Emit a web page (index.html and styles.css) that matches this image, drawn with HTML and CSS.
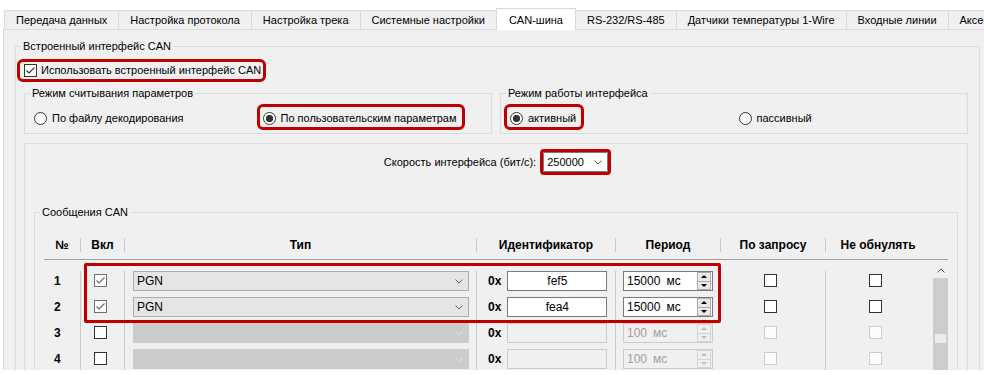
FILE: index.html
```html
<!DOCTYPE html>
<html lang="ru">
<head>
  <meta charset="UTF-8" />
  <title>Настройки — CAN-шина</title>
  <link rel="stylesheet" href="styles.css">
</head>
<body>
  <div class="tabs">
    <div class="tab">Передача данных</div>
    <div class="tab">Настройка протокола</div>
    <div class="tab">Настройка трека</div>
    <div class="tab">Системные настройки</div>
    <div class="tab active">CAN-шина</div>
    <div class="tab">RS-232/RS-485</div>
    <div class="tab">Датчики температуры 1-Wire</div>
    <div class="tab">Входные линии</div>
    <div class="tab">Аксессуары</div>
  </div>

  <div class="page">
    <fieldset class="group outer">
      <legend>Встроенный интерфейс CAN</legend>

      <div class="use-row">
        <label class="check mark mark-use">
          <span class="cb"><svg class="tick" viewBox="0 0 11 11"><polyline points="1.5,5.5 4,8 9.5,2.5"/></svg></span>
          Использовать встроенный интерфейс CAN
        </label>
      </div>

      <div class="modes">
        <fieldset class="group">
          <legend>Режим считывания параметров</legend>
          <div class="radios">
            <label class="radio"><span class="rb"></span>По файлу декодирования</label>
            <label class="radio mark mark-radio"><span class="rb on"></span>По пользовательским параметрам</label>
          </div>
        </fieldset>
        <fieldset class="group">
          <legend>Режим работы интерфейса</legend>
          <div class="radios">
            <label class="radio mark mark-radio mark-active"><span class="rb on"></span>активный</label>
            <label class="radio"><span class="rb"></span>пассивный</label>
          </div>
        </fieldset>
      </div>

      <div class="speed-panel">
        <div class="speed-row">
          <span>Скорость интерфейса (бит/с):</span>
          <div class="combo speed-combo mark mark-tight">
            <span>250000</span>
            <svg class="chev" viewBox="0 0 8 5"><polyline points="0.5,0.5 4,4 7.5,0.5"/></svg>
          </div>
        </div>

        <fieldset class="group msgs">
          <legend>Сообщения CAN</legend>
          <div class="msgs-body">
            <div class="thead">
              <div class="th">№</div>
              <div class="th">Вкл</div>
              <div class="th">Тип</div>
              <div class="th">Идентификатор</div>
              <div class="th">Период</div>
              <div class="th">По запросу</div>
              <div class="th">Не обнулять</div>
            </div>

            <div class="tbody">
              <div class="rows">
                <div class="row">
                  <div class="td c-num">1</div>
                  <div class="td c-on"><span class="cb cb-grey"><svg class="tick" viewBox="0 0 11 11"><polyline points="1.5,5.5 4,8 9.5,2.5"/></svg></span></div>
                  <div class="td c-type"><div class="combo"><span>PGN</span><svg class="chev" viewBox="0 0 8 5"><polyline points="0.5,0.5 4,4 7.5,0.5"/></svg></div></div>
                  <div class="td c-id"><b>0x</b><div class="idbox">fef5</div></div>
                  <div class="td c-per"><div class="spin"><span>15000</span><span class="unit">мс</span><span class="spin-btns"><span><i class="up"></i></span><span><i class="down"></i></span></span></div></div>
                  <div class="td c-flag c-req"><span class="cb"></span></div>
                  <div class="td c-flag"><span class="cb"></span></div>
                </div>
                <div class="row">
                  <div class="td c-num">2</div>
                  <div class="td c-on"><span class="cb cb-grey"><svg class="tick" viewBox="0 0 11 11"><polyline points="1.5,5.5 4,8 9.5,2.5"/></svg></span></div>
                  <div class="td c-type"><div class="combo"><span>PGN</span><svg class="chev" viewBox="0 0 8 5"><polyline points="0.5,0.5 4,4 7.5,0.5"/></svg></div></div>
                  <div class="td c-id"><b>0x</b><div class="idbox">fea4</div></div>
                  <div class="td c-per"><div class="spin"><span>15000</span><span class="unit">мс</span><span class="spin-btns"><span><i class="up"></i></span><span><i class="down"></i></span></span></div></div>
                  <div class="td c-flag c-req"><span class="cb"></span></div>
                  <div class="td c-flag"><span class="cb"></span></div>
                </div>
                <div class="row">
                  <div class="td c-num">3</div>
                  <div class="td c-on"><span class="cb"></span></div>
                  <div class="td c-type"><div class="combo off"><span></span><svg class="chev" viewBox="0 0 8 5"><polyline points="0.5,0.5 4,4 7.5,0.5"/></svg></div></div>
                  <div class="td c-id"><b>0x</b><div class="idbox off"></div></div>
                  <div class="td c-per"><div class="spin off"><span>100</span><span class="unit">мс</span><span class="spin-btns"><span><i class="up"></i></span><span><i class="down"></i></span></span></div></div>
                  <div class="td c-flag c-req"><span class="cb off"></span></div>
                  <div class="td c-flag"><span class="cb off"></span></div>
                </div>
                <div class="row">
                  <div class="td c-num">4</div>
                  <div class="td c-on"><span class="cb"></span></div>
                  <div class="td c-type"><div class="combo off"><span></span><svg class="chev" viewBox="0 0 8 5"><polyline points="0.5,0.5 4,4 7.5,0.5"/></svg></div></div>
                  <div class="td c-id"><b>0x</b><div class="idbox off"></div></div>
                  <div class="td c-per"><div class="spin off"><span>100</span><span class="unit">мс</span><span class="spin-btns"><span><i class="up"></i></span><span><i class="down"></i></span></span></div></div>
                  <div class="td c-flag c-req"><span class="cb off"></span></div>
                  <div class="td c-flag"><span class="cb off"></span></div>
                </div>
                <div class="rows-mark"></div>
              </div>

              <div class="scrollbar">
                <div class="sb-up"><svg class="chev-up" viewBox="0 0 8 5"><polyline points="0.5,4.5 4,1 7.5,4.5"/></svg></div>
                <div class="sb-track"><div class="sb-grip"></div></div>
              </div>
            </div>
          </div>
        </fieldset>
      </div>
    </fieldset>
  </div>
</body>
</html>
```

FILE: styles.css
```css
html, body {
  overflow: hidden;
}

body {
  margin: 0;
  background: #fff;
  font-family: "Liberation Sans", Arial, sans-serif;
  font-size: 11px;
  color: #000;
}

/* tab strip */
.tabs {
  display: flex;
  align-items: flex-end;
  height: 21px;
  margin: 8px 0 0 5px;
}

.tab {
  flex-shrink: 0;
  height: 18px;
  line-height: 18px;
  padding: 0 11px;
  margin-left: -1px;
  border: 1px solid #d9d9d9;
  border-bottom: 0;
  background: #f0f0f0;
  white-space: nowrap;
}

.tab.active {
  height: 20px;
  padding: 1px 12px 0;
  line-height: 20px;
  margin-bottom: -1px;
  background: #fff;
  position: relative;
  z-index: 1;
}

.page {
  height: 341px;
  box-sizing: border-box;
  margin-left: 3px;
  padding: 9px 0 0 11px;
  background: #f0f0f0;
  border-top: 1px solid #d9d9d9;
  border-left: 1px solid #d9d9d9;
  overflow: hidden;
}

/* group boxes */
fieldset.group {
  margin: 0;
  padding: 0;
  min-width: 0;
  border: 1px solid #dcdcdc;
}

fieldset.group legend {
  margin-left: 5px;
  padding: 0 2px;
  line-height: 14px;
}

.outer {
  width: 965px;
  box-sizing: border-box;
}

.use-row {
  padding: 11px 0 0 8px;
}

.check, .radio {
  display: inline-flex;
  align-items: center;
  line-height: 13px;
  white-space: nowrap;
}

.check { gap: 4px; }
.radio { gap: 5px; justify-self: start; }

.cb {
  width: 11px;
  height: 11px;
  flex-shrink: 0;
  border: 1px solid #333;
  background: #fff;
  display: inline-flex;
}

.cb-grey { border-color: #707070; }
.cb-grey .tick { stroke: #666; }

.cb.off {
  border-color: #cccccc;
  background: #fcfcfc;
}

.tick {
  width: 11px;
  height: 11px;
  fill: none;
  stroke: #333;
  stroke-width: 1.1;
}

.rb {
  width: 11px;
  height: 11px;
  flex-shrink: 0;
  border: 1px solid #333;
  border-radius: 50%;
  background: #fff;
}

.rb.on {
  background: radial-gradient(circle, #333 0 3.4px, #fff 3.9px);
}

/* red annotation frames */
.mark {
  outline: 3px solid #c00000;
  outline-offset: 2px;
  border-radius: 1px;
}

.mark-use {
  padding-left: 2px;
  margin-left: -2px;
}

.mark-radio {
  padding: 3px 3px 0 1px;
  margin: -3px -3px 0 -1px;
}

.mark-tight { outline-offset: 0; }

.modes {
  display: flex;
  gap: 8px;
  margin: 8px 11px 0 8px;
}

.modes .group { flex: 1; }

.radios {
  display: grid;
  grid-template-columns: 1fr 1fr;
  align-items: center;
  padding: 12px 0 8px 9px;
}

/* speed + messages */
.speed-panel {
  margin: 9px 11px 0 8px;
  padding: 8px 9px 0;
  border: 1px solid #dcdcdc;
}

.speed-row {
  display: flex;
  justify-content: center;
  align-items: center;
  gap: 7px;
  height: 20px;
}

.combo {
  flex: 1;
  height: 20px;
  box-sizing: border-box;
  display: flex;
  align-items: center;
  justify-content: space-between;
  padding: 0 5px 0 3px;
  border: 1px solid #adadad;
  background: #e5e5e5;
}

.combo.off {
  border-color: #cccccc;
  background: #cccccc;
}

.combo.off .chev { stroke: #e2e2e2; }

.speed-combo {
  flex: none;
  width: 65px;
  border-color: #7a7a7a;
  background: #fff;
}

.chev, .chev-up {
  width: 8px;
  height: 5px;
  fill: none;
  stroke: #606060;
  stroke-width: 1;
}

fieldset.msgs { margin-top: 33px; }

.msgs-body {
  padding: 16px 9px 0;
  font-size: 12px;
}

.thead, .row {
  display: grid;
  grid-template-columns: 36px 44px 352px 139px 105px 105px 105px;
}

.thead {
  padding: 3px 18px 7px 0;
  border-bottom: 1px solid #a0a0a0;
  font-weight: bold;
}

.th {
  line-height: 14px;
  text-align: center;
}

.th + .th { border-left: 1px solid #c8c8c8; }

.tbody {
  display: flex;
  gap: 3px;
  margin-top: 2px;
}

.rows {
  position: relative;
  padding-top: 9px;
}

.row { height: 26px; }

.td {
  display: flex;
  align-items: flex-start;
  line-height: 20px;
}

.td + .td { border-left: 1px solid #c8c8c8; }

.td .cb { margin-top: 3px; }

.c-num {
  padding-left: 10px;
  font-weight: bold;
}

.c-on { padding-left: 13px; }

.c-type { padding: 0 7px 0 8px; }

.c-id {
  padding-left: 11px;
  gap: 6px;
}

.idbox {
  width: 100px;
  height: 20px;
  box-sizing: border-box;
  border: 1px solid #7a7a7a;
  background: #fff;
  text-align: center;
  line-height: 18px;
}

.idbox.off {
  border-color: #cccccc;
  background: #f0f0f0;
}

.c-per { padding-left: 7px; }

.spin {
  width: 90px;
  height: 20px;
  box-sizing: border-box;
  display: flex;
  align-items: center;
  padding: 0 1px 0 3px;
  border: 1px solid #7a7a7a;
  background: #fff;
  line-height: 18px;
}

.spin .unit { margin-left: 6px; }

.spin.off {
  border-color: #cccccc;
  background: #f0f0f0;
  color: #a0a0a0;
}

.spin-btns {
  margin-left: auto;
  width: 14px;
  height: 18px;
  display: flex;
  flex-direction: column;
}

.spin-btns span {
  flex: 1;
  display: flex;
  align-items: center;
  justify-content: center;
  border: 1px solid #adadad;
  background: #e9e9e9;
}

.spin-btns span + span { border-top: 0; }

.spin.off .spin-btns span {
  border-color: #d4d4d4;
  background: #f0f0f0;
}

.up, .down {
  width: 0;
  height: 0;
  border-left: 3px solid transparent;
  border-right: 3px solid transparent;
}

.up { border-bottom: 3px solid #000; }
.down { border-top: 3px solid #000; }

.spin.off .up { border-bottom-color: #bfbfbf; }
.spin.off .down { border-top-color: #bfbfbf; }

.c-flag {
  justify-content: center;
  padding-right: 5px;
}

.td.c-req { border-left: 0; }

.rows-mark {
  position: absolute;
  left: 40px;
  top: 1px;
  width: 637px;
  height: 60px;
  box-sizing: border-box;
  border: 3px solid #c00000;
  border-radius: 2px;
}

/* list scrollbar */
.scrollbar {
  width: 15px;
  display: flex;
  flex-direction: column;
}

.sb-up {
  height: 16px;
  display: flex;
  align-items: center;
  justify-content: center;
  background: #f0f0f0;
}

.sb-track {
  flex: 1;
  padding-top: 56px;
  background: #cdcdcd;
}

.sb-grip {
  height: 9px;
  margin: 0 2px;
  background: #ececec;
}
```
